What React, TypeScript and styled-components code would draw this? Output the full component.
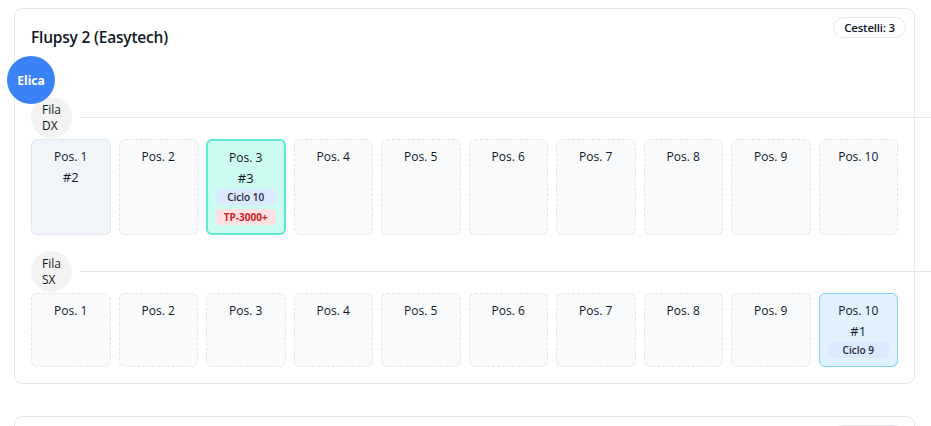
import React from "react";
import styled, { createGlobalStyle } from "styled-components";

type SlotKind = "empty" | "plain" | "active" | "info";

type Tag = { label: string; tone: "blue" | "red" };

type Slot = {
  pos: number;
  kind: SlotKind;
  basket?: number;
  tags?: Tag[];
};

type Row = { name: string; slots: Slot[] };

const GlobalStyle = createGlobalStyle`
  html, body {
    margin: 0;
    padding: 0;
    background: #ffffff;
    overflow: hidden;
  }
  body {
    font-family: "Open Sans", "Noto Sans", "Liberation Sans", sans-serif;
    color: #111827;
  }
`;

const StyledPage = styled.div`
  padding: 8px 16px 8px 14px;
  display: flex;
  flex-direction: column;
  gap: 32px;
`;

const StyledCard = styled.section`
  position: relative;
  background-color: white;
  border: 1px solid #e5e7eb;
  border-radius: 8px;
  padding: 16px;
`;

const StyledTitle = styled.h3`
  margin: 0;
  font-size: 15.5px;
  font-weight: 600;
  line-height: 25px;
  letter-spacing: -0.2px;
`;

const StyledCountBadge = styled.span`
  position: absolute;
  top: 8px;
  right: 8px;
  padding: 1px 10px;
  border: 1px solid #e5e7eb;
  border-radius: 999px;
  background-color: white;
  font-size: 11.5px;
  font-weight: 600;
  line-height: 17px;
  letter-spacing: -0.2px;
`;

const StyledBody = styled.div`
  position: relative;
  padding-top: 47px;
  display: flex;
  flex-direction: column;
  gap: 16px;
`;

const StyledPropeller = styled.div`
  position: absolute;
  top: 6px;
  left: -24px;
  width: 48px;
  height: 48px;
  border-radius: 50%;
  background-color: #3b82f6;
  color: white;
  font-size: 12px;
  font-weight: 700;
  display: flex;
  align-items: center;
  justify-content: center;
  z-index: 2;
`;

const StyledRow = styled.div`
  display: flex;
  flex-direction: column;
  gap: 1px;
`;

const StyledRowHeader = styled.div`
  display: flex;
  align-items: center;
  gap: 8px;
`;

const StyledRowLabel = styled.div`
  width: 41px;
  height: 41px;
  flex-shrink: 0;
  border-radius: 50%;
  background-color: #f3f3f1;
  display: flex;
  align-items: center;
  justify-content: flex-start;
  font-size: 12px;
  font-weight: 500;
  line-height: 16px;
  padding: 0 6px 0 11px;
  box-sizing: border-box;
`;

const StyledRowLine = styled.div`
  flex: 1;
  height: 1px;
  margin-right: -40px;
  background-color: #e5e7eb;
`;

const StyledSlotGrid = styled.div`
  display: grid;
  grid-template-columns: repeat(10, 1fr);
  gap: 8px;
`;

const slotColors: Record<SlotKind, { bg: string; border: string }> = {
  empty: { bg: "#f9fafb", border: "1px dashed #e2e4e8" },
  plain: { bg: "#f1f5f9", border: "1px solid #e2e8f0" },
  active: { bg: "#ccfbf1", border: "2px solid #5eead4" },
  info: { bg: "#e0f2fe", border: "1px solid #7dd3fc" },
};

const StyledSlot = styled.div<{ $kind: SlotKind }>`
  display: flex;
  flex-direction: column;
  align-items: stretch;
  text-align: center;
  padding: 8px;
  border-radius: 6px;
  background-color: ${(p) => slotColors[p.$kind].bg};
  border: ${(p) => slotColors[p.$kind].border};
`;

const StyledPosLabel = styled.div`
  font-size: 12px;
  line-height: 18px;
`;

const StyledBasket = styled.div`
  margin-top: 2px;
  font-size: 13px;
  font-weight: 500;
  line-height: 18px;
`;

const StyledTag = styled.div<{ $tone: "blue" | "red" }>`
  margin-top: 2px;
  & + & {
    margin-top: 4px;
  }
  border-radius: 4px;
  font-size: 10px;
  font-weight: ${(p) => (p.$tone === "red" ? 700 : 600)};
  line-height: 16px;
  background-color: ${(p) => (p.$tone === "red" ? "#fee2e2" : "#dbeafe")};
  color: ${(p) => (p.$tone === "red" ? "#c81e1e" : "#1e293b")};
`;

const makeRow = (name: string, filled: Record<number, Omit<Slot, "pos">>): Row => ({
  name,
  slots: Array.from({ length: 10 }, (_, i) => {
    const pos = i + 1;
    return filled[pos] ? { pos, ...filled[pos] } : { pos, kind: "empty" as SlotKind };
  }),
});

const rows: Row[] = [
  makeRow("DX", {
    1: { kind: "plain", basket: 2 },
    3: {
      kind: "active",
      basket: 3,
      tags: [
        { label: "Ciclo 10", tone: "blue" },
        { label: "TP-3000+", tone: "red" },
      ],
    },
  }),
  makeRow("SX", {
    10: { kind: "info", basket: 1, tags: [{ label: "Ciclo 9", tone: "blue" }] },
  }),
];

const SlotCell = ({ slot }: { slot: Slot }) => (
  <StyledSlot $kind={slot.kind}>
    <StyledPosLabel>Pos. {slot.pos}</StyledPosLabel>
    {slot.basket !== undefined && <StyledBasket>#{slot.basket}</StyledBasket>}
    {slot.tags?.map((t) => (
      <StyledTag key={t.label} $tone={t.tone}>
        {t.label}
      </StyledTag>
    ))}
  </StyledSlot>
);

const FlupsyCard = ({ title, count, rowsData }: { title: string; count: number; rowsData: Row[] }) => (
  <StyledCard>
    <StyledTitle>{title}</StyledTitle>
    <StyledCountBadge>Cestelli: {count}</StyledCountBadge>
    <StyledBody>
      <StyledPropeller>Elica</StyledPropeller>
      {rowsData.map((row) => (
        <StyledRow key={row.name}>
          <StyledRowHeader>
            <StyledRowLabel>Fila {row.name}</StyledRowLabel>
            <StyledRowLine />
          </StyledRowHeader>
          <StyledSlotGrid>
            {row.slots.map((s) => (
              <SlotCell key={s.pos} slot={s} />
            ))}
          </StyledSlotGrid>
        </StyledRow>
      ))}
    </StyledBody>
  </StyledCard>
);

const App = () => {
  return (
    <>
      <GlobalStyle />
      <StyledPage>
        <FlupsyCard title="Flupsy 2 (Easytech)" count={3} rowsData={rows} />
        <FlupsyCard title="Flupsy 1 (Easytech)" count={4} rowsData={rows} />
      </StyledPage>
    </>
  );
};

export default App;
